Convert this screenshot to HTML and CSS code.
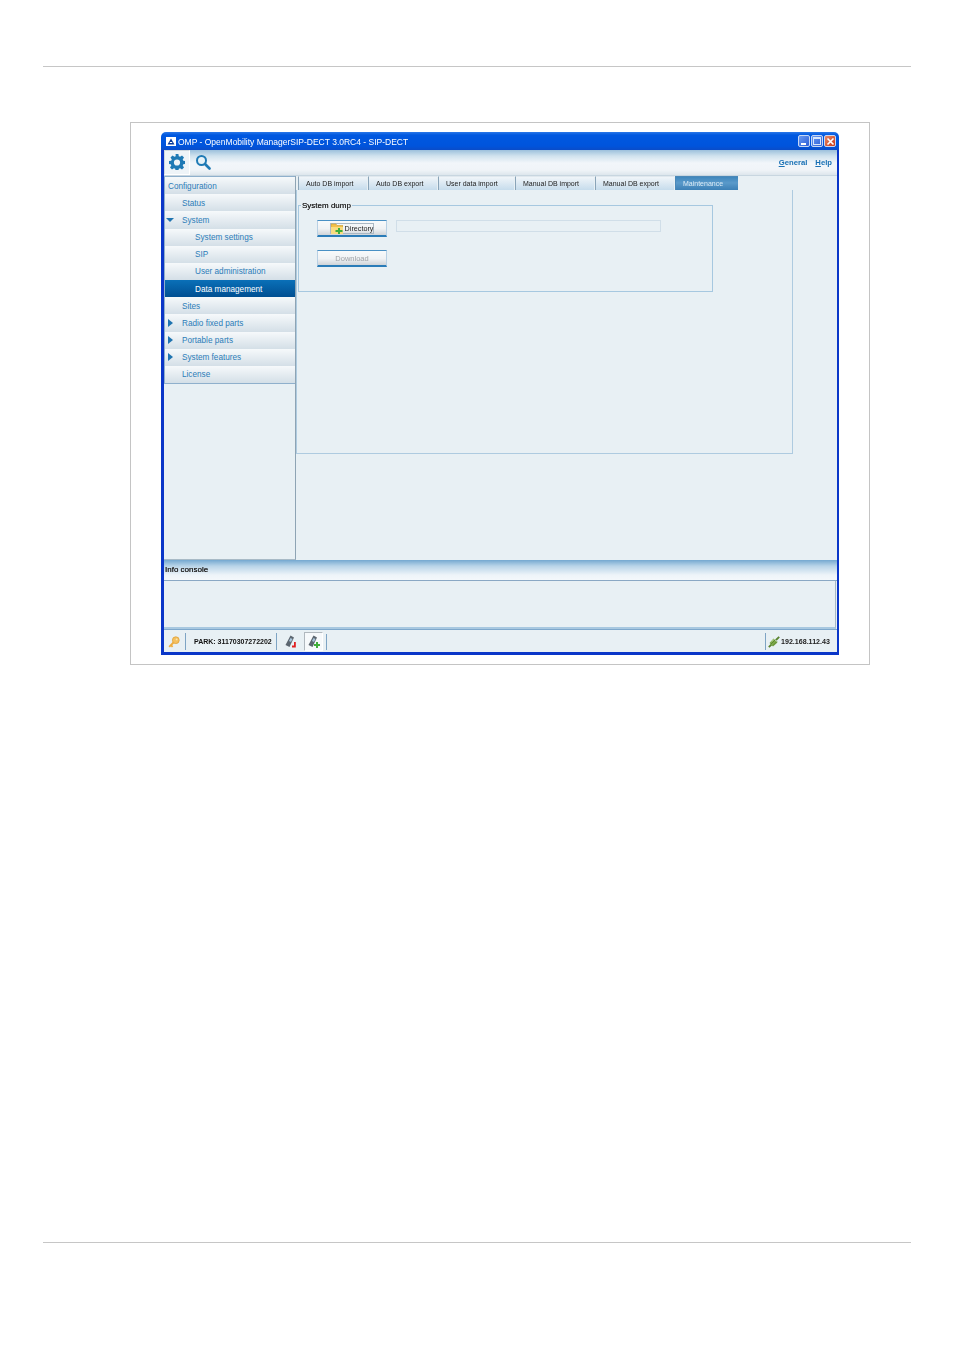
FILE: index.html
```html
<!DOCTYPE html>
<html lang="en">
<head>
<meta charset="utf-8">
<title>OMP</title>
<link rel="stylesheet" href="styles.css">
</head>
<body>
<div class="rule rule-top"></div>
<figure class="figure">
  <div class="window">
    <div class="titlebar">
      <svg class="logo" viewBox="0 0 10 9"><rect width="10" height="9" fill="#fff"/><path d="M5 1.500 8.500 7.500H1.500Z" fill="#0a3a9a"/><rect x="3.800" y="5" width="2.400" height="1" fill="#fff"/></svg>
      <span class="title-text">OMP - OpenMobility ManagerSIP-DECT 3.0RC4 - SIP-DECT</span>
      <span class="controls">
        <span class="ctl ctl-min"><i></i></span>
        <span class="ctl ctl-max"><i></i></span>
        <span class="ctl ctl-close"><svg viewBox="0 0 9 9"><path d="M1.500 1.500 7.500 7.500M7.500 1.500 1.500 7.500" stroke="#fff" stroke-width="1.600"/></svg></span>
      </span>
    </div>
    <div class="frame">
      <div class="toolbar">
        <span class="tool tool-on">
          <svg viewBox="0 0 16 16" width="16" height="16"><path fill="#1f7ab5" fill-rule="evenodd" d="M6.600 0h2.800l.4 2.200 1.300.6L13 1.500l2 2-1.300 1.900.6 1.300 2.200.4v2.800l-2.200.4-.6 1.300 1.300 1.900-2 2-1.900-1.300-1.300.6-.4 2.200H6.600l-.4-2.200-1.300-.6L3 15.500l-2-2 1.300-1.900-.6-1.300L0 9.900V7.100l2.200-.4.6-1.300L1.500 3.500l2-2 1.900 1.300 1.300-.6ZM8 5.400a3.100 3.100 0 1 0 0 6.200 3.100 3.100 0 0 0 0-6.200Z"/></svg>
        </span>
        <span class="tool">
          <svg viewBox="0 0 16 16" width="16" height="16"><circle cx="6.500" cy="6.500" r="4.500" fill="#e6f2f8" stroke="#1f7ab5" stroke-width="2"/><path d="M10 10l4.500 4.500" stroke="#1f7ab5" stroke-width="2.600" stroke-linecap="round"/></svg>
        </span>
        <span class="links"><a><u>G</u>eneral</a><a><u>H</u>elp</a></span>
      </div>
      <div class="workspace">
        <nav class="sidebar">
          <ul class="menu">
            <li class="item lvl0">Configuration</li>
            <li class="item lvl1">Status</li>
            <li class="item lvl1"><i class="arrow arrow-down"></i>System</li>
            <li class="item lvl2">System settings</li>
            <li class="item lvl2">SIP</li>
            <li class="item lvl2">User administration</li>
            <li class="item lvl2 active">Data management</li>
            <li class="item lvl1">Sites</li>
            <li class="item lvl1"><i class="arrow arrow-right"></i>Radio fixed parts</li>
            <li class="item lvl1"><i class="arrow arrow-right"></i>Portable parts</li>
            <li class="item lvl1"><i class="arrow arrow-right"></i>System features</li>
            <li class="item lvl1">License</li>
          </ul>
        </nav>
        <main class="content">
          <div class="tabs">
            <span class="tab t1">Auto DB import</span>
            <span class="tab t2">Auto DB export</span>
            <span class="tab t3">User data import</span>
            <span class="tab t4">Manual DB import</span>
            <span class="tab t5">Manual DB export</span>
            <span class="tab t6 tab-on">Maintenance</span>
          </div>
          <div class="panel">
            <fieldset class="group">
              <legend>System dump</legend>
              <div class="row">
                <button class="btn" type="button">
                  <span class="btn-focus">
                    <svg viewBox="0 0 12 11" width="12" height="11"><path d="M0 1h5l1 1.500h6V11H0Z" fill="#f2c04a" stroke="#c99a30" stroke-width=".6"/><rect x="0" y="4" width="12" height="7" fill="#f8dc80"/><path d="M7 5h2v2h2.500v2H9v2H7V9H4.500V7H7Z" fill="#3fae3a"/></svg>
                    Directory
                  </span>
                </button>
                <span class="progress"></span>
              </div>
              <button class="btn btn-off" type="button">Download</button>
            </fieldset>
          </div>
        </main>
      </div>
      <div class="console-head">Info console</div>
      <div class="console"></div>
      <div class="status">
        <span class="cell cell-key">
          <svg viewBox="0 0 12 12" width="12" height="12"><circle cx="7.800" cy="4.200" r="3.400" fill="#f4c060" stroke="#e0a238" stroke-width=".8"/><circle cx="8.600" cy="3.400" r=".9" fill="#fbe6b0"/><path d="M5.500 6.500 1.200 10.800M3 9.200l1.600 1.600" stroke="#eeac3e" stroke-width="1.900"/></svg>
        </span>
        <span class="cell cell-park">PARK: 31170307272202</span>
        <span class="cell cell-phone">
          <svg viewBox="0 0 13 13" width="13" height="13"><path d="M6.500 0.500 10 2.500 5.500 12 1.500 10Z" fill="#5c6670"/><path d="M6.500 3 8.500 4 7 7 5 6Z" fill="#a8c4d8"/><path d="M10 7h1.800v5.500H10ZM8 10.500h3.800V12.500H8Z" fill="#e02020"/></svg>
        </span>
        <span class="cell-on">
          <svg viewBox="0 0 13 13" width="13" height="13"><path d="M6.500 0.500 10 2.500 5.500 12 1.500 10Z" fill="#5c6670"/><path d="M6.500 3 8.500 4 7 7 5 6Z" fill="#a8c4d8"/><path d="M9 7h2v2h2v2h-2v2H9v-2H7V9h2Z" fill="#3fae3a"/></svg>
        </span>
        <span class="sep"></span>
        <span class="spacer"></span>
        <span class="cell-ip">
          <svg viewBox="0 0 12 12" width="12" height="12"><path d="M0.800 11.200 4 8M8 4 11.200 0.800" stroke="#5a8430" stroke-width="1.800"/><path d="M1.500 7 5.500 2.500 9.500 6.500 5 10.500Z" fill="#7ca848"/><path d="M3 8 7.500 3.500M5 9.500 9 5.500" stroke="#557f2c" stroke-width=".8"/><path d="M3.500 5.800 6 3.300" stroke="#b8d894" stroke-width="1"/></svg>
          192.168.112.43
        </span>
      </div>
    </div>
  </div>
</figure>
<div class="rule rule-bottom"></div>
</body>
</html>
```
FILE: styles.css
```css
* { box-sizing: border-box; }
html, body { margin: 0; padding: 0; background: #fff; }
body { width: 954px; height: 1350px; overflow: hidden; font-family: "Liberation Sans", Arial, sans-serif; font-size: 8.2px; color: #222; }

.rule { height: 1px; background: #c6c6c6; margin-left: 43px; width: 868px; }
.rule-top { margin-top: 66px; }
.rule-bottom { margin-top: 577px; }

.figure { margin: 55px 0 0 130px; width: 740px; height: 543px; border: 1px solid #c4c4c4; padding: 9px 30px 0; }

.window { width: 678px; height: 523px; display: flex; flex-direction: column; filter: blur(0.35px); }

.titlebar { height: 18px; flex: none; display: flex; align-items: center; padding: 1px 3px 0 5px; border-radius: 5px 5px 0 0; background: linear-gradient(#2a78e8 0, #0058e0 3px, #0054dc 14px, #0a4cc8 100%); color: #fff; font-size: 8.500px; }
.logo { width: 10px; height: 9px; margin-right: 2px; flex: none; }
.title-text { flex: 1; white-space: nowrap; }
.controls { display: flex; gap: 1px; margin-top: -1px; }
.ctl { width: 12px; height: 12px; display: flex; align-items: center; justify-content: center; border: 1px solid #c8d8f4; border-radius: 2px; background: linear-gradient(135deg, #6a9af0, #2c5ed8); position: relative; }
.ctl-min i { width: 5px; height: 2px; background: #fff; margin-top: 6px; margin-right: 2px; }
.ctl-max i { width: 8px; height: 8px; border: 1px solid #d8e6fa; border-top-width: 2px; }
.ctl-close { background: linear-gradient(135deg, #e88a68, #c83a18); }
.ctl-close svg { width: 9px; height: 9px; }

.frame { flex: 1; min-height: 0; display: flex; flex-direction: column; border: solid #0a36c8; border-width: 0 2px 3px 3px; background: #e8f0f4; }

.toolbar { height: 26px; flex: none; display: flex; align-items: center; background: linear-gradient(#9cc0dc 0, #d0e2ee 6px, #f2f6fa 13px, #f0f4f8 20px, #dde6ec 100%); border-bottom: 1px solid #c8d6e0; }
.tool { width: 26px; height: 25px; display: flex; align-items: center; justify-content: center; padding-bottom: 1px; }
.tool-on { background: #eef4f8; border: 1px solid; border-color: #cfd8de #fff #fff #cfd8de; }
.links { margin-left: auto; display: flex; gap: 8px; padding-right: 5px; color: #1870b4; font-weight: 700; font-size: 7.700px; }

.workspace { height: 384px; flex: none; display: flex; }
.sidebar { width: 132px; flex: none; border-right: 1px solid #8ea4b4; border-bottom: 1px solid #a8bac6; }
.menu { list-style: none; margin: 0; padding: 0; display: grid; grid-auto-rows: 17.180px; border: solid #8fb0cc; border-width: 1px 0 1px 1px; height: 208px; }
.item { display: flex; align-items: center; position: relative; white-space: nowrap; color: #2c7cb8; font-size: 8.200px; padding-top: 1px; background: linear-gradient(#f6f9fb, #d4dfe7); }
.lvl0 { padding-left: 3px; }
.lvl1 { padding-left: 17px; }
.lvl2 { padding-left: 30px; }
.active { background: linear-gradient(#0a70b8, #004f92); color: #fff; }
.arrow { position: absolute; left: 1px; top: 50%; width: 0; height: 0; }
.arrow-down { margin-top: -2px; border: 4px solid transparent; border-top: 4px solid #1f74b0; border-bottom: 0; }
.arrow-right { left: 3px; margin-top: -4px; border: 4px solid transparent; border-left: 5px solid #1f74b0; border-right: 0; }

.content { flex: 1; min-width: 0; }
.tabs { height: 14px; display: flex; padding: 0 0 0 2px; }
.tab { height: 14px; display: flex; align-items: center; padding-left: 7px; white-space: nowrap; font-size: 7px; color: #222; margin-right: 1px; background: linear-gradient(#f0f5f9, #c6dcec); border-left: 1px solid #8aa4b8; border-top: 1px solid #e0e8ee; }
.t1 { width: 69px; }
.t2 { width: 69px; }
.t3 { width: 76px; }
.t4 { width: 79px; }
.t5 { width: 79px; }
.t6 { width: 63px; margin: 0; }
.tab-on { background: linear-gradient(#3e86bc, #5a9aca 45%, #3c80b6); color: #dcecf6; border-color: #4a88b8; }

.panel { width: 497px; height: 264px; padding: 15px 0 0 1px; border: solid #aecbe0; border-width: 0 1px 1px 1px; }
.group { margin: 0; width: 415px; height: 87px; padding: 8px 0 0 18px; border: 1px solid #a6c8e0; display: block; position: relative; }
.group legend { padding: 0 1px; margin-left: 2px; font-size: 8px; line-height: 9px; color: #222; position: absolute; top: -5px; left: 0; background: #e8f0f4; text-shadow: 0 0 .4px #444; }
.row { display: flex; align-items: flex-start; gap: 9px; height: 30px; margin-top: 6px; }
.btn { display: flex; align-items: center; justify-content: center; width: 70px; height: 17px; padding: 0; margin: 0; border: 1px solid #b8d0e4; border-bottom: 2px solid #2a7cb8; border-top: 1px solid #4a90c4; background: linear-gradient(#f8fafb, #f0f2f4 55%, #cfd4d8); font: inherit; font-size: 7.500px; color: #222; }
.btn-focus { display: flex; align-items: center; gap: 2px; height: 11px; margin-left: 0; border: 1px solid #aab8c4; white-space: nowrap; font-size: 7.200px; }
.btn-off { color: #a0a4a8; }
.progress { width: 265px; height: 12px; border: 1px solid #d0dee8; background: #e8f0f4; }

.console-head { height: 21px; flex: none; padding: 5px 0 0 1px; line-height: 9px; font-size: 8px; color: #222; background: linear-gradient(#74a8d0 0, #b8d4e8 6px, #eef4f9 15px, #f4f8fb 100%); border-bottom: 1px solid #8aa8c4; text-shadow: 0 0 .3px #333; }
.console { height: 48px; flex: none; border-right: 1px solid #a8b8c4; margin-right: 1px; background: #e8f0f4; border-bottom: 2px solid #a8c8e0; }
.status { flex: 1; display: flex; align-items: center; padding-top: 1px; border-top: 1px solid #7ea8cc; background: #e8f0f4; }
.cell { height: 17px; display: flex; align-items: center; border-right: 1px solid #7ea4c4; }
.cell-key { width: 22px; padding-left: 4px; }
.cell-park { width: 91px; padding-left: 8px; font-weight: 700; font-size: 7px; color: #111; white-space: nowrap; }
.cell-phone { width: 27px; padding-left: 7px; border-right: 0; }
.cell-on { width: 19px; height: 19px; display: flex; align-items: center; justify-content: center; background: #f6f9fb; border: 1px solid; border-color: #b0b8be #fff #fff #b0b8be; }
.sep { width: 1px; height: 16px; background: #7ea4c4; margin-left: 3px; }
.spacer { flex: 1; }
.cell-ip { height: 17px; display: flex; align-items: center; gap: 1px; width: 72px; padding-left: 2px; border-left: 1px solid #7ea4c4; font-weight: 700; font-size: 7.100px; color: #222; white-space: nowrap; }
```
